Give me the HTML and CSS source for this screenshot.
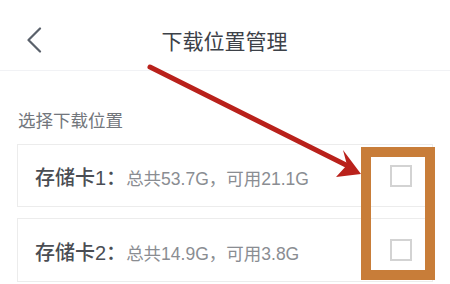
FILE: index.html
```html
<!DOCTYPE html>
<html lang="zh-CN">
<head>
<meta charset="utf-8">
<title>下载位置管理</title>
<link rel="stylesheet" href="styles.css">
</head>
<body>
<div class="page">
  <header class="topbar">
    <span class="back">
      <svg width="16" height="26" viewBox="0 0 16 26"><path d="M14 1.5 L2.5 13 L14 24.5" fill="none" stroke="#5a616b" stroke-width="2.2" stroke-linecap="round" stroke-linejoin="round"/></svg>
    </span>
    <h1 class="title">下载位置管理</h1>
  </header>
  <main class="content">
    <div class="section-label">选择下载位置</div>
    <div class="card">
      <div class="card-text"><span class="name">存储卡1：</span><span class="detail">总共53.7G，可用21.1G</span></div>
      <span class="checkbox"></span>
    </div>
    <div class="card card-second">
      <div class="card-text"><span class="name">存储卡2：</span><span class="detail">总共14.9G，可用3.8G</span></div>
      <span class="checkbox"></span>
    </div>
  </main>
  <div class="highlight"></div>
  <svg class="arrow" width="450" height="284" viewBox="0 0 450 284">
    <line x1="150" y1="67" x2="346" y2="165" stroke="#b9211b" stroke-width="5" stroke-linecap="round"/>
    <polygon points="361,174 343,150 347,165 336,177" fill="#b9211b"/>
  </svg>
</div>
</body>
</html>
```

FILE: styles.css
```css
* { box-sizing: border-box; margin: 0; padding: 0; }
html, body { width: 450px; height: 284px; overflow: hidden; background: #ffffff; }
body { font-family: "Liberation Sans", "Noto Sans CJK SC", sans-serif; }
.page { position: relative; width: 450px; height: 284px; }
.topbar {
  position: relative;
  height: 71px;
  border-bottom: 1px solid #f1f2f5;
  display: flex;
  align-items: center;
  justify-content: center;
}
.back {
  position: absolute;
  left: 26px;
  top: 27px;
  display: flex;
}
.title {
  font-size: 21px;
  font-weight: 400;
  color: #3d4148;
  line-height: 24px;
  margin-top: 13px;
  margin-left: -1px;
}
.content { padding: 0 17px; }
.section-label {
  padding-top: 38px;
  padding-bottom: 11px;
  font-size: 17.5px;
  line-height: 24px;
  color: #72767c;
  padding-left: 1px;
}
.card {
  height: 63px;
  border: 1px solid #ececec;
  display: flex;
  align-items: center;
  justify-content: space-between;
  padding: 0 20px 0 17px;
}
.card-second { margin-top: 11px; height: 64px; }
.card-text { display: flex; align-items: baseline; padding-top: 2px; }
.name { font-size: 20px; font-weight: 500; color: #4a4d53; }
.detail { font-size: 17.5px; color: #8a8d92; }
.checkbox {
  width: 22px;
  height: 22px;
  border: 2px solid #d3d3d3;
  background: #fff;
}
.highlight {
  position: absolute;
  left: 361px;
  top: 147px;
  width: 74px;
  height: 133px;
  border: 10px solid #c87d39;
}
.arrow { position: absolute; left: 0; top: 0; }
```
